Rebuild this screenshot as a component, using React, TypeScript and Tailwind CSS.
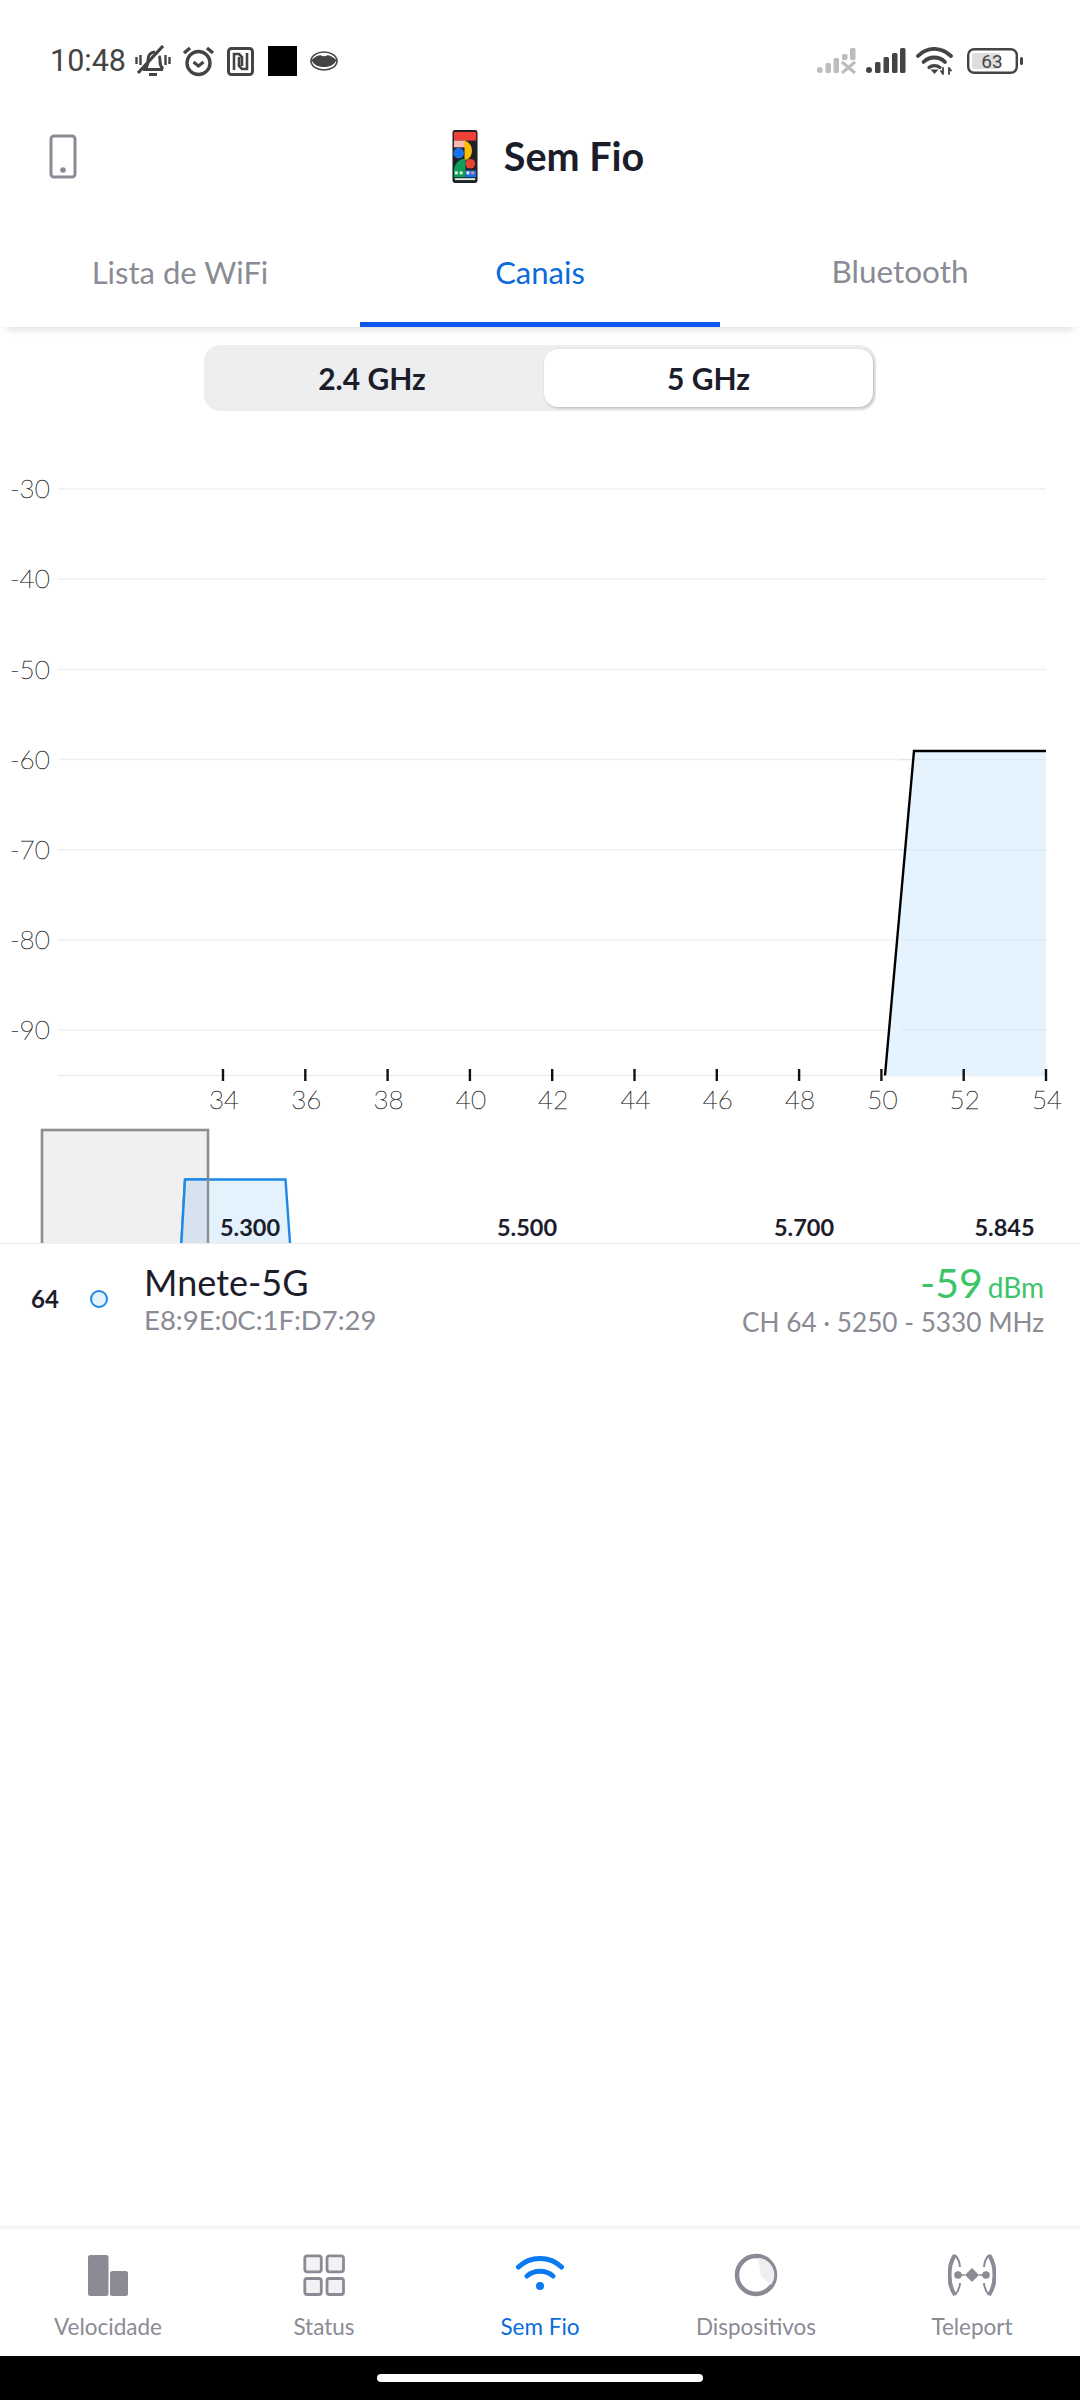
import React from "react";

const GRAY = "#8a8b94";
const gridY = [489, 579, 669.5, 759.6, 849.8, 940, 1030];
const gridLabels = ["-30", "-40", "-50", "-60", "-70", "-80", "-90"];
const ticks = ["34", "36", "38", "40", "42", "44", "46", "48", "50", "52", "54"];

function BellOff() {
  return (
    <svg width="36" height="32" viewBox="0 0 36 32" fill="none" stroke="#444" strokeWidth="3">
      <path d="M8 24.5h20M10 24c2-2 3-4 3-9c0-5 3-8 7-8M24 11c1 1 1 3 1 5c0 3 1 6 3 8" />
      <path d="M3 28L28 1" strokeWidth="3.2" />
      <path d="M14 29.5h8" strokeWidth="3" />
      <path d="M1.5 12v7M5.5 10v10M30.5 10v10M34.5 12v7" strokeWidth="2.4" />
    </svg>
  );
}
function Alarm() {
  return (
    <svg width="33" height="32" viewBox="0 0 33 32" fill="none" stroke="#444">
      <circle cx="16.5" cy="18" r="11.5" strokeWidth="3.4" />
      <path d="M11.5 17l5 4l5-4" strokeWidth="3" />
      <path d="M2 8l6-5M31 8l-6-5" strokeWidth="3.4" />
    </svg>
  );
}
function Nfc() {
  return (
    <svg width="27" height="29" viewBox="0 0 27 29" fill="none" stroke="#444">
      <rect x="1.5" y="1.5" width="24" height="26" rx="3" strokeWidth="3" />
      <path d="M7 23V7h5l3 3v9M20 6v16h-5l-3-3v-9" strokeWidth="2.6" />
    </svg>
  );
}
function Eye() {
  return (
    <svg width="28" height="20" viewBox="0 0 28 20">
      <ellipse cx="14" cy="10" rx="13" ry="9" fill="#fff" stroke="#444" strokeWidth="1.6" />
      <path d="M1.5 9c3-3 7-5.5 9.5-4.500c2 1 4 1 6 0c2.5-1 6 1.5 9.5 4.500c-2 4.500-6 7-12.500 7s-10.500-2.500-12.500-7z" fill="#444" />
    </svg>
  );
}
function SignalOff() {
  return (
    <svg width="40" height="26" viewBox="0 0 40 26" fill="#bdbdbd">
      <rect x="0" y="19" width="5.5" height="6" rx="2.5" />
      <rect x="8.5" y="15" width="5.5" height="10" rx="1.5" />
      <rect x="16.5" y="10" width="5.5" height="15" rx="1.5" />
      <rect x="25" y="6" width="5.5" height="6" rx="1.5" />
      <rect x="33" y="0" width="5.5" height="12" rx="1.5" />
      <path d="M25 14l13 11M38 14l-13 11" stroke="#bdbdbd" strokeWidth="3.2" fill="none" />
    </svg>
  );
}
function Signal() {
  return (
    <svg width="40" height="26" viewBox="0 0 40 26" fill="#444">
      <rect x="0" y="19" width="6" height="6" rx="3" />
      <rect x="9" y="14" width="5.5" height="11" rx="1.5" />
      <rect x="17.5" y="9" width="5.5" height="16" rx="1.5" />
      <rect x="26" y="5" width="5.5" height="20" rx="1.5" />
      <rect x="34" y="0" width="5.5" height="25" rx="1.5" />
    </svg>
  );
}
function WifiStatus() {
  return (
    <svg width="38" height="28" viewBox="0 0 38 28" fill="none" stroke="#444" strokeLinecap="round">
      <path d="M2 9C11 -0.5 25 -0.5 35 9" strokeWidth="3.8" />
      <path d="M7.5 15C13.5 9 23 9 29 15" strokeWidth="3.8" />
      <path d="M13 20.5C16 18 21 18 24 20.5" strokeWidth="3.2" />
      <path d="M14.5 22.5h8l-4 4.5z" fill="#444" stroke="none" />
      <path d="M27 21v6M25 24l2 3M33 21v6M33 21l2 2.5" strokeWidth="1.8" />
    </svg>
  );
}
function Battery() {
  return (
    <svg width="57" height="26" viewBox="0 0 57 26">
      <rect x="1.2" y="1.2" width="48.6" height="23.6" rx="6" fill="#fff" stroke="#444" strokeWidth="2.4" />
      <rect x="5" y="5" width="28" height="16" rx="2" fill="#dedede" />
      <text x="25" y="20" textAnchor="middle" fontSize="19" fill="#444" fontFamily="Roboto, sans-serif">63</text>
      <rect x="53" y="9" width="3" height="8" rx="1.5" fill="#444" />
    </svg>
  );
}
function PixelPhone() {
  return (
    <svg width="26" height="55" viewBox="0 0 27 55">
      <rect x="0.5" y="0" width="26" height="55" rx="2.5" fill="#202124" />
      <rect x="2" y="2" width="23" height="9" fill="#ef4136" />
      <rect x="2" y="11" width="12" height="7" fill="#f8b9b0" />
      <path d="M13 11a11 11 0 0 1 0 21z" fill="#fbbc04" />
      <circle cx="7" cy="24" r="5.5" fill="#1a73e8" />
      <circle cx="19" cy="35" r="5" fill="#ea4335" />
      <path d="M2 44a11 13 0 0 1 12-14v14z" fill="#0f9d58" />
      <rect x="2" y="42" width="12" height="7" fill="#0f9d58" />
      <rect x="14" y="42" width="11" height="7" fill="#1a73e8" />
      <rect x="3" y="43" width="3" height="3" fill="#e8f5e9" />
      <rect x="8" y="43" width="3" height="3" fill="#e8f5e9" />
      <rect x="15" y="43" width="3" height="3" fill="#e8f0fe" />
      <rect x="20" y="43" width="3" height="3" fill="#f28b82" />
      <rect x="3" y="50" width="21" height="2" fill="#d7f0e0" />
    </svg>
  );
}
function DeviceIcon() {
  return (
    <svg width="28" height="45" viewBox="0 0 28 45" fill="none">
      <rect x="2" y="2" width="24" height="41" rx="3" stroke={GRAY} strokeWidth="3" />
      <circle cx="14" cy="36" r="2.8" fill={GRAY} />
    </svg>
  );
}

function NavVelocidade() {
  return (
    <svg width="42" height="42" viewBox="0 0 42 42" fill={GRAY}>
      <rect x="1" y="1" width="20.5" height="41" rx="2.5" />
      <rect x="23" y="17" width="18" height="25" rx="2.5" />
    </svg>
  );
}
function NavStatus() {
  return (
    <svg width="42" height="42" viewBox="0 0 42 42" fill="#f1f2f4" stroke={GRAY} strokeWidth="2.8">
      <rect x="1.8" y="1.8" width="16.5" height="16" rx="2.5" />
      <rect x="24" y="1.8" width="16.5" height="16" rx="2.5" />
      <rect x="1.8" y="24.5" width="16.5" height="16" rx="2.5" />
      <rect x="24" y="24.5" width="16.5" height="16" rx="2.5" />
    </svg>
  );
}
function NavWifi() {
  return (
    <svg width="48" height="42" viewBox="0 0 48 42" fill="none" stroke="#0a7af0" strokeLinecap="round">
      <path d="M2.5 13C14 1.5 34 1.5 45.5 13" strokeWidth="5" />
      <path d="M11 22C18 15.5 30 15.5 37 22" strokeWidth="5" />
      <circle cx="24" cy="32" r="4" fill="#0a7af0" stroke="none" />
    </svg>
  );
}
function NavDevices() {
  return (
    <svg width="44" height="44" viewBox="0 0 44 44">
      <circle cx="22" cy="22" r="19" fill="#fff" stroke={GRAY} strokeWidth="4.5" />
      <path d="M24 5a17 17 0 0 1 13 27l-10-9z" fill="#eeeff2" />
    </svg>
  );
}
function NavTeleport() {
  return (
    <svg width="48" height="42" viewBox="0 0 48 42" fill="none" stroke={GRAY}>
      <path d="M7 1C2 8 1.5 14 1.5 21s.5 13 5.5 20" strokeWidth="4" />
      <path d="M7 1c3 3 4.5 6 5 12M7 41c3-3 4.5-6 5-12" strokeWidth="2" />
      <path d="M41 1c5 7 5.5 13 5.5 20s-.5 13-5.5 20" strokeWidth="4" />
      <path d="M41 1c-3 3-4.5 6-5 12M41 41c-3-3-4.5-6-5-12" strokeWidth="2" />
      <circle cx="10" cy="21" r="3.8" fill={GRAY} stroke="none" />
      <circle cx="38" cy="21" r="3.8" fill={GRAY} stroke="none" />
      <path d="M24 14l7 7l-7 7l-7-7z" fill={GRAY} stroke="none" />
      <path d="M10 21h7M31 21h7" strokeWidth="1.4" />
    </svg>
  );
}

function Chart() {
  return (
    <svg width="1080" height="709" viewBox="0 411 1080 709" className="block" fontFamily="Lato, sans-serif">
      {gridY.map((y, i) => (
        <g key={y}>
          <line x1="58" x2="1046" y1={y} y2={y} stroke="#f0f0f2" strokeWidth="1.5" />
          <text x="10" y={y + 9} fontSize="26" fontWeight="200" fill="#222" stroke="#333" strokeWidth="0.45">{gridLabels[i]}</text>
        </g>
      ))}
      <line x1="58" x2="1046" y1="1075.5" y2="1075.5" stroke="#ededef" strokeWidth="1.5" />
      <path d="M885 1075.5L914 751H1046V1075.5z" fill="#e3f2fd" fillOpacity="0.95" />
      {gridY.slice(3).map((y) => (
        <line key={y} x1="900" x2="1046" y1={y} y2={y} stroke="#d9e8f3" strokeWidth="1.2" />
      ))}
      <path d="M885 1075.5L914 751H1046" fill="none" stroke="#000" strokeWidth="2.4" />
      {ticks.map((t, i) => {
        const x = 223 + i * 82.3;
        return (
          <g key={t}>
            <line x1={x} x2={x} y1="1069" y2="1081" stroke="#111" strokeWidth="2.4" />
            <text x={x + 1} y="1109" textAnchor="middle" fontSize="26" fontWeight="200" fill="#222" stroke="#333" strokeWidth="0.45">{t}</text>
          </g>
        );
      })}
    </svg>
  );
}

function Bands() {
  return (
    <svg width="1080" height="123" viewBox="0 1120 1080 123" className="block" fontFamily="Lato, sans-serif">
      <rect x="42" y="1130" width="166" height="120" fill="#f0f0f0" stroke="#8e8e8e" strokeWidth="2.6" />
      <path d="M185 1179.5H285.5L290.5 1250H181z" fill="#e3f2fd" stroke="#1e88e5" strokeWidth="2.4" />
      <path d="M185 1180H207V1243H181z" fill="#d6e3ef" />
      <path d="M185 1179.5L181 1250" stroke="#1e88e5" strokeWidth="2.4" fill="none" />
      <path d="M185 1179.5H207" stroke="#1e88e5" strokeWidth="2.4" fill="none" />
      <line x1="208" x2="208" y1="1179" y2="1243" stroke="#8e8e8e" strokeWidth="2.4" />
      {[["5.300", 250], ["5.500", 527], ["5.700", 804], ["5.845", 1004.5]].map(([t, x]) => (
        <text key={t as string} x={x as number} y="1236" textAnchor="middle" fontSize="23.5" fontWeight="700" fill="#1c1d2b">{t}</text>
      ))}
    </svg>
  );
}

function NavItem({ icon, label, active }: { icon: React.ReactNode; label: string; active?: boolean }) {
  return (
    <div className="flex flex-col items-center">
      <div className="flex h-[44px] items-center justify-center">{icon}</div>
      <div className={`mt-[14px] text-[22.5px] leading-[32px] ${active ? "text-[#0a6cdc]" : "text-[#8a8b94]"}`}>{label}</div>
    </div>
  );
}

export default function App() {
  return (
    <div className="flex h-[2400px] w-[1080px] flex-col overflow-hidden bg-white font-['Lato',sans-serif]">
      {/* Status bar */}
      <div className="flex h-[122px] shrink-0 items-center pl-[50px] pr-[56px]">
        <span className="font-['Roboto',sans-serif] text-[30.5px] leading-none text-[#444]">10:48</span>
        <div className="ml-[9px] flex items-center">
          <BellOff />
          <div className="ml-[11px]"><Alarm /></div>
          <div className="ml-[12px]"><Nfc /></div>
          <div className="ml-[14px] h-[30px] w-[29px] bg-black" />
          <div className="ml-[13px]"><Eye /></div>
        </div>
        <div className="ml-auto flex items-center">
          <SignalOff />
          <div className="ml-[9px]"><Signal /></div>
          <div className="ml-[10px]"><WifiStatus /></div>
          <div className="ml-[13px]"><Battery /></div>
        </div>
      </div>

      {/* Title */}
      <div className="relative flex h-[68px] shrink-0 items-center justify-center">
        <div className="absolute left-[49px] top-[12px]"><DeviceIcon /></div>
        <div className="ml-[16px] flex items-center gap-[26px]">
          <PixelPhone />
          <span className="text-[39.5px] font-bold leading-none text-[#1c1d2b]">Sem Fio</span>
        </div>
      </div>

      {/* Tabs */}
      <div className="relative z-10 mt-[27px] grid h-[110px] shrink-0 grid-cols-3 shadow-[0_8px_8px_-6px_rgba(0,0,0,0.14)]">
        <div className="flex items-center justify-center text-[31px] text-[#8a8b94]">Lista de WiFi</div>
        <div className="relative flex items-center justify-center text-[31px] text-[#0a6cdc]">
          Canais
          <div className="absolute inset-x-0 bottom-0 h-[5px] bg-[#0b57f0]" />
        </div>
        <div className="flex items-center justify-center text-[31.5px] text-[#8a8b94]">Bluetooth</div>
      </div>

      {/* Segmented */}
      <div className="mx-auto mt-[18px] flex h-[66px] w-[672px] shrink-0 items-center rounded-[16px] bg-[#edeef0]">
        <div className="w-[336px] text-center text-[30px] font-bold text-[#1c1d2b]">2.4 GHz</div>
        <div className="ml-[4px] flex h-[58px] w-[329px] items-center justify-center rounded-[14px] bg-white text-[30px] font-bold text-[#1c1d2b] shadow-[1px_1px_3px_rgba(0,0,0,0.25)]">5 GHz</div>
      </div>

      <Chart />
      <Bands />

      {/* Row */}
      <div className="flex h-[102px] shrink-0 items-center border-t border-[#eeeeee] pt-[8px]">
        <div className="w-[90px] text-center text-[24px] font-bold text-[#1c1d2b]">64</div>
        <div className="h-[18px] w-[18px] rounded-full border-[2.5px] border-[#1e88e5] bg-[#e3f2fd]" />
        <div className="ml-[36px] flex flex-col">
          <span className="text-[36px] leading-[42px] text-[#1c1d2b]">Mnete-5G</span>
          <span className="text-[27.5px] leading-[34px] text-[#8a8b94]">E8:9E:0C:1F:D7:29</span>
        </div>
        <div className="ml-auto flex flex-col items-end pr-[36px] pt-[10px]">
          <span className="leading-[27px] text-[#3cc46a]">
            <span className="text-[41px]">-59</span>
            <span className="ml-[5px] text-[28px]">dBm</span>
          </span>
          <span className="text-[26.2px] leading-[34px] text-[#8a8b94]">CH 64 · 5250 - 5330 MHz</span>
        </div>
      </div>

      <div className="flex-1" />

      {/* Bottom nav */}
      <div className="grid h-[131px] shrink-0 grid-cols-5 border-t-[4px] border-[#f6f6f6] pt-[24px]">
        <NavItem icon={<NavVelocidade />} label="Velocidade" />
        <NavItem icon={<NavStatus />} label="Status" />
        <NavItem icon={<NavWifi />} label="Sem Fio" active />
        <NavItem icon={<NavDevices />} label="Dispositivos" />
        <NavItem icon={<NavTeleport />} label="Teleport" />
      </div>
      <div className="flex h-[44px] shrink-0 items-center justify-center bg-black">
        <div className="h-[8px] w-[326px] rounded-full bg-white" />
      </div>
    </div>
  );
}
